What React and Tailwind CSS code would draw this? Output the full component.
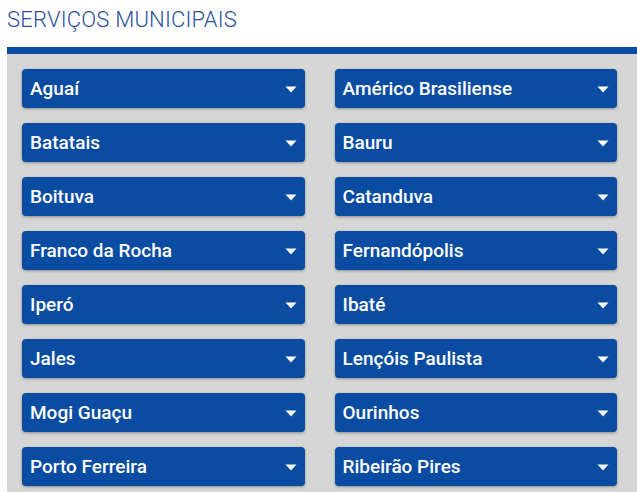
import React from "react";

const left = ["Aguaí","Batatais","Boituva","Franco da Rocha","Iperó","Jales","Mogi Guaçu","Porto Ferreira"];
const right = ["Américo Brasiliense","Bauru","Catanduva","Fernandópolis","Ibaté","Lençóis Paulista","Ourinhos","Ribeirão Pires"];

function Item({ name }) {
  return (
    <div className="h-[39px] bg-[#0a4ca1] rounded-[4px] shadow-[0_1px_3px_rgba(0,0,0,0.35)] flex items-center justify-between pl-[8px] pr-[8px]">
      <span className="text-white text-[19px] font-medium leading-none">{name}</span>
      <svg width="12" height="7" viewBox="0 0 12 7" className="mt-[2px]">
        <path d="M0.5 0.5 L11.5 0.5 L6 6.5 Z" fill="white" />
      </svg>
    </div>
  );
}

export default function App() {
  const items = [];
  for (let i = 0; i < left.length; i++) {
    items.push(<Item key={"l" + i} name={left[i]} />);
    items.push(<Item key={"r" + i} name={right[i]} />);
  }
  return (
    <div className="w-[637px] h-[492px] overflow-hidden bg-white" style={{ fontFamily: "Roboto, 'Liberation Sans', sans-serif" }}>
      <div className="h-[47px] pl-[7px] pt-[7px]">
        <h1 className="text-[22px] leading-[26px] font-light text-[#2a4f9e] tracking-[0.2px]">SERVIÇOS MUNICIPAIS</h1>
      </div>
      <div className="ml-[7px] border-t-[7px] border-[#0a4ca1] bg-[#d6d6d6] pt-[15px] pl-[15px] pr-[20px] pb-[15px] grid grid-cols-2 gap-x-[30px] gap-y-[15px]">
        {items}
      </div>
    </div>
  );
}
